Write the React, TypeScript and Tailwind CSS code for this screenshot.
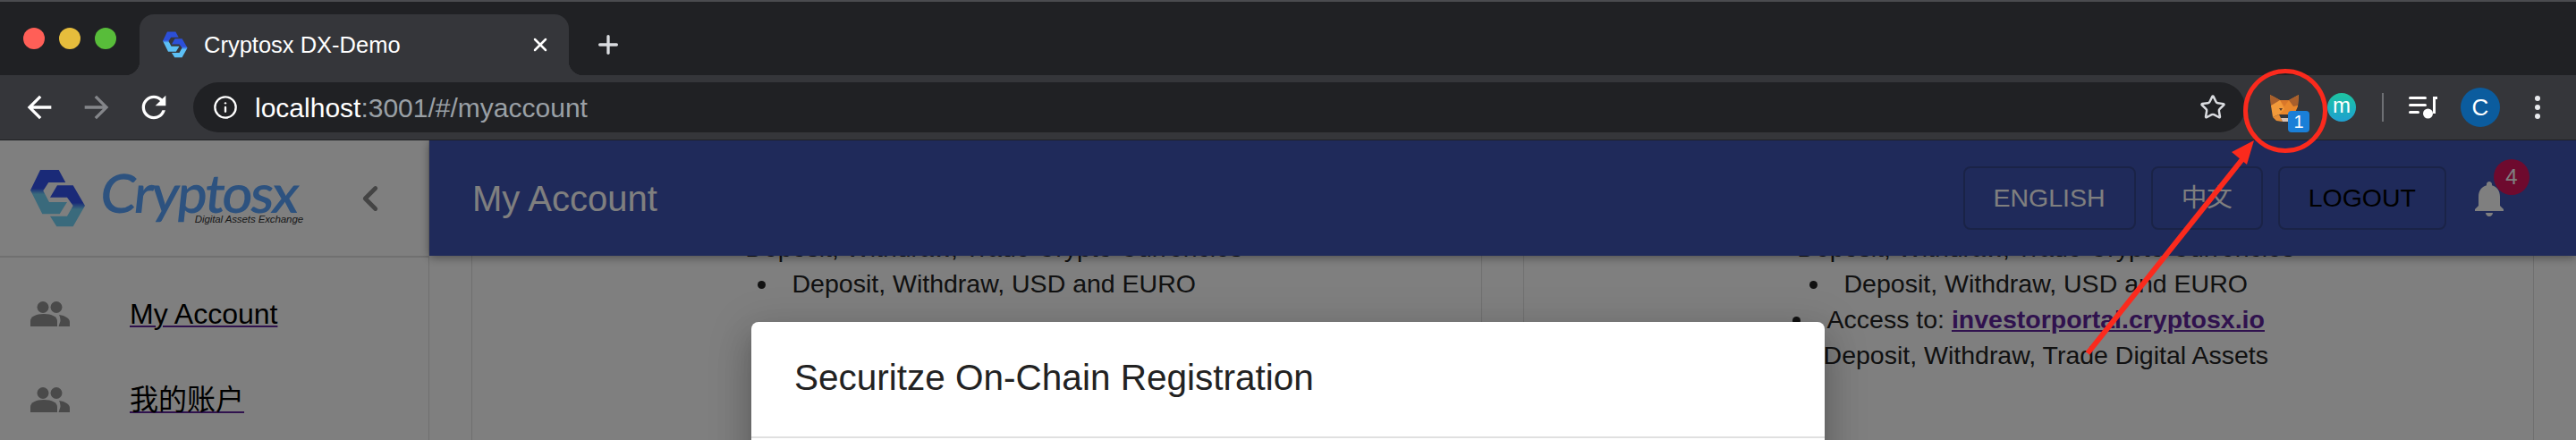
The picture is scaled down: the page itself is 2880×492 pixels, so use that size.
import React from 'react';
import { ChevronLeft, Info, Plus, Star, X } from 'lucide-react';

const HexLogo: React.FC<{ id: string; top: string; bottom: string; className?: string }> = ({ id, top, bottom, className }) => (
    <svg viewBox="0 0 62 66" className={className}>
        <defs>
            <linearGradient id={`${id}a`} x1="0" y1="0" x2="0" y2="1">
                <stop offset="0.42" stopColor={top} />
                <stop offset="0.55" stopColor={bottom} />
            </linearGradient>
            <linearGradient id={`${id}b`} x1="0" y1="0" x2="0" y2="1">
                <stop offset="0.42" stopColor={top} />
                <stop offset="0.58" stopColor={bottom} />
            </linearGradient>
        </defs>
        <polygon points="11,1 31.700,1 39.300,15 20.300,15 14.300,24.300 21,37 41,37 32.700,50.300 13.300,50.300 0,23.700" fill={`url(#${id}a)`} />
        <polygon points="30,18.300 47.700,18.300 61,41 47.700,64.300 29.300,64.300 22,52.700 41,52.700 47.700,41 41,31.700 22,31.700" fill={`url(#${id}b)`} />
    </svg>
);

const Fox: React.FC = () => (
    <svg viewBox="0 0 32 32" className="w-8 h-8">
        <polygon points="0,2 11,8 21,8 32,2 31,15 27,24 5,24 1,14" fill="#e8872c" />
        <polygon points="0,2 11,8 6,15 1,14" fill="#a85f2c" />
        <polygon points="32,2 21,8 26,15 31,14" fill="#a85f2c" />
        <polygon points="11,8 21,8 16,15" fill="#d9772a" />
        <polygon points="1,14 11,8 16,18 10,24 3,27" fill="#f29a3a" />
        <polygon points="3,27 10,24 14,32 7,31" fill="#e58c34" />
        <polygon points="12,28 22,28 21,32 14,32" fill="#d7c1b3" />
        <polygon points="10,17 14,17 12,20" fill="#5a3d2a" />
    </svg>
);

const MaterialIcon: React.FC<{ d: string; className: string }> = ({ d, className }) => (
    <svg viewBox="0 0 24 24" className={className} fill="currentColor">
        <path d={d} />
    </svg>
);

const QueueIcon: React.FC = () => (
    <svg viewBox="0 0 32 28" className="w-8 h-7" fill="white">
        <rect x="0" y="2" width="20" height="3" rx="1.5" />
        <rect x="0" y="10" width="20" height="3" rx="1.5" />
        <rect x="0" y="18" width="12" height="3" rx="1.5" />
        <rect x="27" y="2" width="3" height="19" />
        <rect x="27" y="2" width="5" height="3" />
        <circle cx="21.500" cy="21" r="5.500" />
    </svg>
);

const PeopleIcon: React.FC = () => (
    <svg viewBox="0 0 44 28" className="w-[44px] h-[28px]" fill="#949494">
        <circle cx="14" cy="6.500" r="6.500" />
        <circle cx="29" cy="6.500" r="6.500" />
        <path d="M0 28v-6c0-5 6-8 15-8s15 3 15 8v6z" />
        <path d="M31.500 28h12.500v-5c0-4-5-7-12-8 1 2 1.500 4 1.500 7z" />
    </svg>
);

const NavItem: React.FC<{ label: string }> = ({ label }) => (
    <div className="flex items-center h-[96px] pl-[34px]">
        <PeopleIcon />
        <a className="ml-[67px] text-[32px] text-black underline decoration-[#60259c] decoration-2 underline-offset-2">{label}</a>
    </div>
);

const HeaderButton: React.FC<{ label: string; dark?: boolean }> = ({ label, dark }) => (
    <button className={`h-[71px] px-[32px] border-2 border-[#34468f] rounded-lg text-[28.5px] ${dark ? 'text-black' : 'text-white'}`}>
        {label}
    </button>
);

const Card: React.FC<{ children: React.ReactNode }> = ({ children }) => (
    <div className="w-[1130px] shrink-0 bg-white border-x border-[#e0e0e0] text-center text-[28.5px] leading-[40px] text-[#222] pt-[20px]">
        {children}
    </div>
);

const Annotation: React.FC = () => (
    <svg viewBox="0 0 2880 492" className="absolute inset-0 z-30 w-[2880px] h-[492px] pointer-events-none">
        <circle cx="2555" cy="124" r="44.500" fill="none" stroke="#fb2a1d" strokeWidth="5" />
        <line x1="2334" y1="395" x2="2507" y2="178" stroke="#fb2a1d" strokeWidth="6" />
        <polygon points="2520,157 2495,170 2512,184" fill="#fb2a1d" />
    </svg>
);

export default function App() {
    return (
        <div className="relative w-[2880px] h-[492px] overflow-hidden bg-white font-['Liberation_Sans','Noto_Sans_CJK_SC',sans-serif]">
            {/* browser chrome */}
            <div className="h-[84px] bg-[#202124] border-t-2 border-[#4a4b4f] flex items-end">
                <div className="flex gap-[16px] pl-[26px] pr-[26px] self-center">
                    <span className="w-6 h-6 rounded-full bg-[#ff5f57]" />
                    <span className="w-6 h-6 rounded-full bg-[#e6bd3c]" />
                    <span className="w-6 h-6 rounded-full bg-[#58bd3a]" />
                </div>
                <div className="relative w-[480px] h-[68px] bg-[#35363a] rounded-t-2xl flex items-center pl-[26px] pr-[20px]">
                    <span className="absolute -left-4 bottom-0 w-4 h-4 bg-[radial-gradient(circle_at_0_0,#202124_16px,#35363a_16.5px)]" />
                    <span className="absolute -right-4 bottom-0 w-4 h-4 bg-[radial-gradient(circle_at_100%_0,#202124_16px,#35363a_16.5px)]" />
                    <HexLogo id="fav" top="#2c4fd8" bottom="#5cc0f5" className="w-[28px] h-[30px]" />
                    <span className="ml-[18px] text-[25.5px] text-white flex-1">Cryptosx DX-Demo</span>
                    <X className="w-6 h-6 text-white" strokeWidth={2.5} />
                </div>
                <Plus className="ml-[28px] mb-[18px] w-8 h-8 text-[#dadce0]" strokeWidth={2.5} />
            </div>
            <div className="h-[73px] bg-[#35363a] border-b border-[#202124] flex items-center pl-[24px] pr-[26px]">
                <MaterialIcon className="w-10 h-10 text-white" d="M20 11H7.830l5.590-5.590L12 4l-8 8 8 8 1.410-1.410L7.830 13H20v-2z" />
                <MaterialIcon className="ml-[24px] w-10 h-10 text-[#84868a]" d="M12 4l-1.410 1.410L16.170 11H4v2h12.170l-5.580 5.590L12 20l8-8z" />
                <MaterialIcon className="ml-[24px] w-10 h-10 text-white" d="M17.650 6.350A7.958 7.958 0 0 0 12 4c-4.420 0-7.990 3.580-7.990 8s3.570 8 7.990 8c3.730 0 6.840-2.550 7.730-6h-2.080A5.990 5.990 0 0 1 12 18c-3.310 0-6-2.690-6-6s2.690-6 6-6c1.660 0 3.140.69 4.220 1.780L13 11h7V4l-2.350 2.350z" />
                <div className="ml-[24px] w-[2294px] h-[56px] shrink-0 rounded-full bg-[#202124] flex items-center pl-[22px] pr-[21px]">
                    <Info className="w-7 h-7 text-white" strokeWidth={2} />
                    <span className="ml-[19px] text-[30px] text-white flex-1">
                        localhost<span className="text-[#9aa0a6]">:3001/#/myaccount</span>
                    </span>
                    <Star className="w-[30px] h-[30px] text-[#dadce0]" strokeWidth={2} />
                </div>
                <div className="relative ml-[28px] w-8 h-8">
                    <Fox />
                    <span className="absolute left-[20px] top-[20px] w-6 h-6 rounded-sm bg-[#1a7fd8] text-white text-[20px] leading-6 text-center">1</span>
                </div>
                <span className="ml-[32px] w-8 h-8 rounded-full bg-gradient-to-b from-[#1fc4a0] to-[#219fd0] text-white text-[24px] leading-[28px] text-center">m</span>
                <span className="ml-[29px] w-[2px] h-8 bg-[#6e7074]" />
                <span className="ml-[28px]"><QueueIcon /></span>
                <span className="ml-[26px] w-11 h-11 rounded-full bg-[#0b5c9e] text-white text-[26px] leading-[44px] text-center">C</span>
                <div className="ml-[39px] flex flex-col gap-[4px]">
                    <span className="w-[6px] h-[6px] rounded-full bg-[#e8eaed]" />
                    <span className="w-[6px] h-[6px] rounded-full bg-[#e8eaed]" />
                    <span className="w-[6px] h-[6px] rounded-full bg-[#e8eaed]" />
                </div>
            </div>

            {/* page */}
            <div className="relative h-[335px] flex overflow-hidden">
                <aside className="w-[480px] shrink-0 bg-white border-r border-[#e0e0e0]">
                    <div className="h-[131px] border-b-2 border-[#e0e0e0] flex items-center pl-[34px]">
                        <HexLogo id="logo" top="#3454f0" bottom="#74d4f8" className="w-[62px] h-[66px]" />
                        <div className="ml-[17px] w-[226px] flex flex-col">
                            <span className="block text-[60px] leading-[46px] font-['Lato',sans-serif] font-semibold -skew-x-6 text-[#5ba5ff] tracking-[-2.5px]">Cryptosx</span>
                            <span className="text-right text-[11.5px] leading-[14px] italic text-[#333] tracking-[-0.1px]">Digital Assets Exchange</span>
                        </div>
                        <ChevronLeft className="ml-[52px] w-[46px] h-[46px] text-[#888]" strokeWidth={2.5} />
                    </div>
                    <div className="pt-[15px]">
                        <NavItem label="My Account" />
                        <NavItem label="我的账户" />
                    </div>
                </aside>
                <main className="flex-1 min-w-0 flex flex-col">
                    <header className="relative z-10 h-[129px] shrink-0 bg-[#3e54b4] shadow-[0_2px_10px_rgba(0,0,0,0.4)] flex items-center pl-[48px] pr-[73px]">
                        <h1 className="text-[40px] text-white flex-1">My Account</h1>
                        <div className="flex items-center gap-[17px]">
                            <HeaderButton label="ENGLISH" />
                            <HeaderButton label="中文" />
                            <HeaderButton label="LOGOUT" dark />
                        </div>
                        <div className="relative ml-[24px] w-[48px] h-[48px]">
                            <MaterialIcon className="w-12 h-12 text-white" d="M12 22c1.100 0 2-.9 2-2h-4c0 1.100.9 2 2 2zm6-6v-5c0-3.070-1.640-5.640-4.500-6.320V4c0-.83-.67-1.500-1.500-1.500s-1.500.67-1.500 1.500v.68C7.630 5.360 6 7.920 6 11v5l-2 2v1h16v-1l-2-2z" />
                            <span className="absolute left-[29px] top-[-20px] w-[40px] h-[40px] rounded-full bg-[#dc145c] text-white text-[24px] leading-[40px] text-center">4</span>
                        </div>
                    </header>
                    <div className="flex-1 flex gap-[46px] pl-[47px] -mt-[49px]">
                        <Card>
                            <ul className="list-disc list-inside">
                                <li>Deposit, Withdraw, Trade Crypto Currencies</li>
                                <li>Deposit, Withdraw, USD and EURO</li>
                            </ul>
                        </Card>
                        <Card>
                            <ul className="list-disc list-inside">
                                <li>Deposit, Withdraw, Trade Crypto Currencies</li>
                                <li>Deposit, Withdraw, USD and EURO</li>
                                <li>Access to: <a className="font-bold text-[#60259c] underline">investorportal.cryptosx.io</a></li>
                                <li>Deposit, Withdraw, Trade Digital Assets</li>
                            </ul>
                        </Card>
                    </div>
                </main>
                <div className="absolute inset-0 z-20 bg-black/50 flex justify-center pt-[203px]">
                    <div className="w-[1200px] h-[400px] bg-white rounded-lg shadow-[0_11px_15px_-7px_rgba(0,0,0,0.2),0_24px_38px_3px_rgba(0,0,0,0.14),0_9px_46px_8px_rgba(0,0,0,0.12)]">
                        <h2 className="h-[130px] pb-[4px] px-[48px] flex items-center text-[40.5px] text-[#222] border-b-2 border-[#e0e0e0]">Securitze On-Chain Registration</h2>
                    </div>
                </div>
            </div>
            <Annotation />
        </div>
    );
}
